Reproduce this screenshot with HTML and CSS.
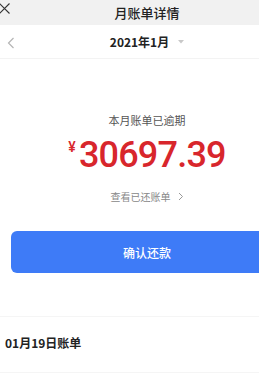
FILE: index.html
```html
<html>
    <head>
        <title>月账单详情</title>
        <link rel="stylesheet" href="styles.css">
    </head>
    <body>
        <div class="viewport">
            <div class="page">
                <div class="topbar">
                    <svg class="close" width="11" height="11" viewBox="0 0 11 11"><path d="M0.5 0.5 L10.5 10.5 M10.5 0.5 L0.5 10.5" stroke="#333" stroke-width="1.1"/></svg>
                    <span class="title">月账单详情</span>
                </div>
                <div class="month-row">
                    <svg class="back" width="8" height="12" viewBox="0 0 8 12"><path d="M6.5 1 L1.5 6 L6.5 11" fill="none" stroke="#b5b5b5" stroke-width="1.2"/></svg>
                    <span class="month">2021年1月</span>
                    <svg class="caret" width="6" height="4" viewBox="0 0 6 4"><path d="M0 0 H6 L3 3.5 Z" fill="#c8c8c8"/></svg>
                </div>
                <div class="summary">
                    <div class="status">本月账单已逾期</div>
                    <div class="amount"><span class="yen">¥</span>30697.39</div>
                    <div class="paid-link">查看已还账单
                        <svg width="6" height="9" viewBox="0 0 6 9"><path d="M1 1 L4.5 4.5 L1 8" fill="none" stroke="#999" stroke-width="1"/></svg>
                    </div>
                </div>
                <button class="pay-button">确认还款</button>
                <div class="bill-list">
                    <div class="bill-item">01月19日账单</div>
                </div>
            </div>
        </div>
    </body>
</html>
```

FILE: styles.css
```css
* {
    margin: 0;
    padding: 0;
    box-sizing: border-box;
}

html, body {
    overflow: hidden;
    background-color: white;
}

body {
    font-family: "Noto Sans CJK SC", "Noto Sans", sans-serif;
}

.viewport {
    width: 259px;
    height: 380px;
    overflow: hidden;
}

.page {
    width: 294px;
}

.topbar {
    height: 25px;
    background-color: #f1f1f1;
    display: flex;
    align-items: center;
    justify-content: center;
    position: relative;
}

.close {
    position: absolute;
    left: -1px;
    top: 3px;
}

.title {
    font-size: 13px;
    color: #222;
    font-weight: 500;
}

.month-row {
    height: 34px;
    display: flex;
    align-items: center;
    justify-content: center;
    position: relative;
    border-bottom: 1px solid #f3f3f3;
}

.back {
    position: absolute;
    left: 7px;
    top: 12px;
}

.month {
    font-size: 12px;
    font-weight: 700;
    color: #222;
}

.caret {
    margin-left: 9px;
}

.summary {
    display: flex;
    flex-direction: column;
    align-items: center;
    padding-top: 53px;
}

.status {
    font-size: 11px;
    color: #555;
    line-height: 16px;
}

.amount {
    margin-top: 9px;
    font-family: "Roboto", sans-serif;
    font-weight: 500;
    font-size: 36px;
    line-height: 36px;
    color: #d8262c;
    letter-spacing: -0.8px;
    display: flex;
    align-items: flex-start;
}

.yen {
    font-size: 14px;
    line-height: 14px;
    margin-right: 4px;
    margin-top: 3px;
}

.paid-link {
    margin-top: 16px;
    font-size: 10px;
    color: #888;
    display: flex;
    align-items: center;
    gap: 7px;
}

.pay-button {
    display: block;
    margin: 27px 11px 0 11px;
    width: 272px;
    height: 42px;
    border: none;
    border-radius: 6px;
    background-color: #3e7bf7;
    color: white;
    font-family: "Noto Sans CJK SC", sans-serif;
    font-size: 12px;
    font-weight: 500;
}

.bill-list {
    margin-top: 43px;
    border-top: 1px solid #f5f5f5;
}

.bill-item {
    padding: 17px 5px 0 5px;
    height: 56px;
    font-size: 12px;
    font-weight: 700;
    color: #222;
    border-bottom: 1px solid #f5f5f5;
}
```
